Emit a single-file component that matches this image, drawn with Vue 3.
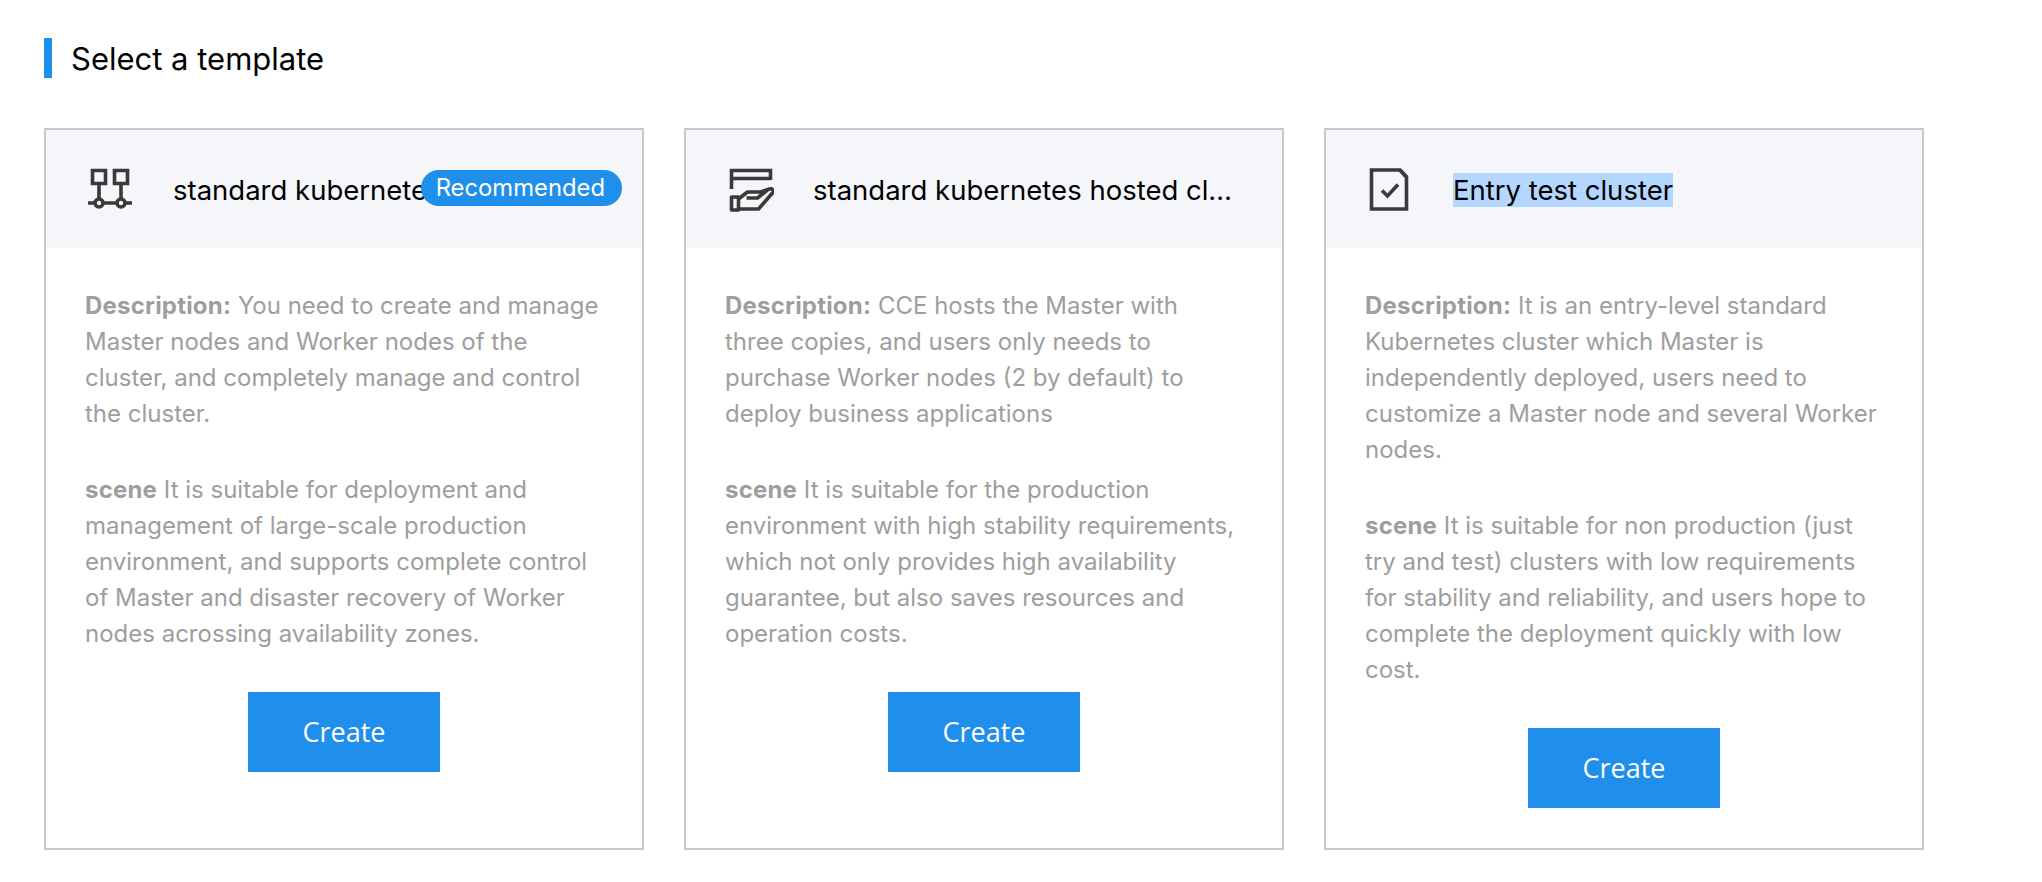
<template>
  <div class="page">
    <h2 class="heading">Select a template</h2>
    <div class="cards">
      <div class="card" v-for="card in cards" :key="card.title">
        <div class="card-head">
          <svg class="icon" viewBox="0 0 48 48" fill="none" stroke="#3a3a3a" stroke-width="3.600">
            <template v-if="card.icon === 'nodes'">
              <path d="M6.500 5.500h13v13h-13zM28.500 5.500h13v13h-13zM13 18.500v15M35 18.500v15M2 38h7M17 38h14M39 38h7" />
              <circle cx="13" cy="38" r="4" />
              <circle cx="35" cy="38" r="4" />
            </template>
            <g v-else-if="card.icon === 'hand'" transform="translate(1.500 0)">
              <path d="M4 24V5.500h39V15M4 13.500h39" />
              <path d="M4 32h7v13H4zM11 34l9-7h13l9-3c3-1 5 2 3 4L31 44H11M19 33h11l10-8" stroke-linejoin="round" />
            </g>
            <g v-else transform="translate(1 0.500)">
              <path d="M4.500 4.500H33l6.500 7v32H4.500z" />
              <path d="M33 4.500l6.500 7" />
              <path d="M15 25l5.500 5.500L31 19" />
            </g>
          </svg>
          <span class="card-title"><span :class="{ selected: card.selected }">{{ card.title }}</span></span>
          <span class="badge" v-if="card.recommended">Recommended</span>
        </div>
        <div class="card-body">
          <p><b>Description:</b> {{ card.desc }}</p>
          <p class="scene"><b>scene</b> {{ card.scene }}</p>
          <button class="create-btn">Create</button>
        </div>
      </div>
    </div>
  </div>
</template>

<script setup>
import { ref } from "vue";

const cards = ref([
  {
    icon: "nodes",
    title: "standard kubernetes cluster",
    recommended: true,
    desc: "You need to create and manage Master nodes and Worker nodes of the cluster, and completely manage and control the cluster.",
    scene:
      "It is suitable for deployment and management of large-scale production environment, and supports complete control of Master and disaster recovery of Worker nodes acrossing availability zones.",
  },
  {
    icon: "hand",
    title: "standard kubernetes hosted cluster",
    desc: "CCE hosts the Master with three copies, and users only needs to purchase Worker nodes (2 by default) to deploy business applications",
    scene:
      "It is suitable for the production environment with high stability requirements, which not only provides high availability guarantee, but also saves resources and operation costs.",
  },
  {
    icon: "doc",
    title: "Entry test cluster",
    selected: true,
    desc: "It is an entry-level standard Kubernetes cluster which Master is independently deployed, users need to customize a Master node and several Worker nodes.",
    scene:
      "It is suitable for non production (just try and test) clusters with low requirements for stability and reliability, and users hope to complete the deployment quickly with low cost.",
  },
]);
</script>

<style>
body {
  background: #fff;
}
</style>

<style scoped>
.page {
  padding: 38px 0 0 44px;
  font-family: Inter, "Liberation Sans", sans-serif;
}

.heading {
  margin: 0 0 50px;
  padding: 2px 0 0 19px;
  border-left: 8px solid #208eeb;
  font-size: 31px;
  font-weight: 400;
  line-height: 38px;
  color: #000;
}

.cards {
  display: flex;
  gap: 40px;
}

.card {
  position: relative;
  width: 600px;
  height: 722px;
  box-sizing: border-box;
  border: 2px solid #c8c8c8;
}

.card-head {
  display: flex;
  align-items: center;
  height: 118px;
  padding-left: 40px;
  background: #f5f6fa;
}

.icon {
  width: 48px;
  height: 48px;
  flex-shrink: 0;
  margin-right: 39px;
}

.card-title {
  width: 420px;
  padding-top: 2px;
  overflow: hidden;
  white-space: nowrap;
  text-overflow: ellipsis;
  font-size: 27.500px;
  line-height: 36px;
  color: #000;
}

.selected {
  background: #b3d7fe;
}

.badge {
  position: absolute;
  top: 40px;
  right: 20px;
  padding: 0 17px 0 15px;
  border-radius: 18px;
  background: #208eeb;
  color: #fff;
  font-size: 23.800px;
  line-height: 36px;
}

.card-body {
  padding: 40px 43px 0 39px;
  color: #9e9e9e;
  font-size: 24px;
  line-height: 36px;
  text-align: left;
}

.card-body p {
  margin: 0;
}

.card-body .scene {
  margin-top: 40px;
}

.card-body b {
  font-weight: 700;
  letter-spacing: 0.200px;
}

.create-btn {
  display: block;
  width: 192px;
  height: 80px;
  margin: 40px 0 0 163px;
  padding: 0 0 2px;
  border: 0;
  background: #208eeb;
  color: #fff;
  font-family: "Open Sans", sans-serif;
  font-size: 27px;
}
</style>
